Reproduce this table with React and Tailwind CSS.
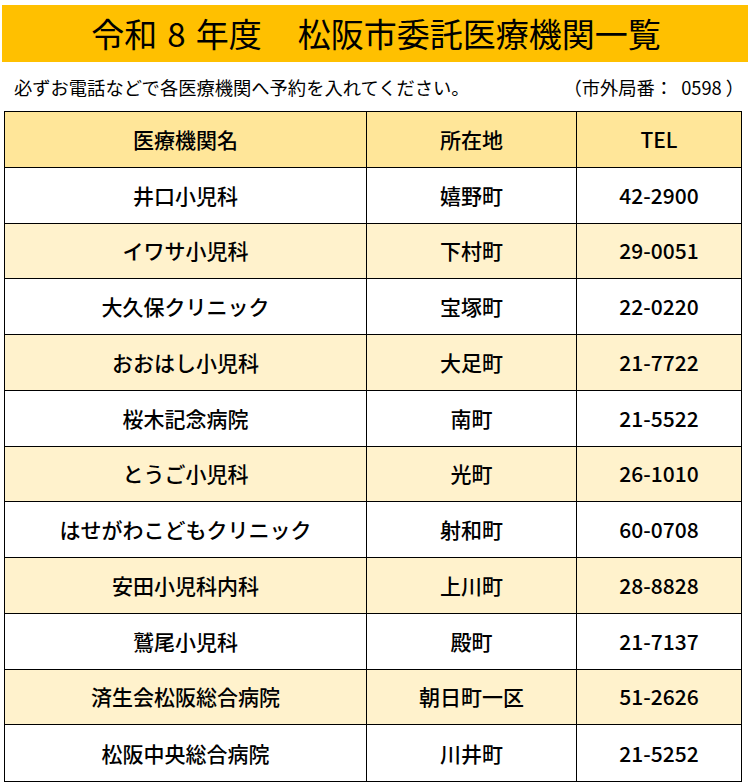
import React from "react";

const rows = [
  ["井口小児科", "嬉野町", "42-2900"],
  ["イワサ小児科", "下村町", "29-0051"],
  ["大久保クリニック", "宝塚町", "22-0220"],
  ["おおはし小児科", "大足町", "21-7722"],
  ["桜木記念病院", "南町", "21-5522"],
  ["とうご小児科", "光町", "26-1010"],
  ["はせがわこどもクリニック", "射和町", "60-0708"],
  ["安田小児科内科", "上川町", "28-8828"],
  ["鷲尾小児科", "殿町", "21-7137"],
  ["済生会松阪総合病院", "朝日町一区", "51-2626"],
  ["松阪中央総合病院", "川井町", "21-5252"],
];

const font = { fontFamily: '"Noto Sans CJK JP", "Noto Sans", sans-serif' };

function Row({ cells, bg, last }) {
  return (
    <div
      className={`flex h-[55.75px] ${bg} ${last ? "" : "border-b border-black"}`}
    >
      <div className="w-[362px] flex items-center justify-center border-r border-black">
        {cells[0]}
      </div>
      <div className="w-[210px] flex items-center justify-center border-r border-black">
        {cells[1]}
      </div>
      <div className="flex-1 flex items-center justify-center">{cells[2]}</div>
    </div>
  );
}

export default function App() {
  return (
    <div
      className="w-[748px] h-[784px] bg-white text-black overflow-hidden"
      style={font}
    >
      <div className="h-[5px]" />
      <div className="ml-[2px] h-[57px] bg-[#FFC000] flex items-center justify-center text-[33px] leading-none pl-[2px]">
        <span>令和</span>
        <span className="ml-[10px]">8</span>
        <span className="ml-[10px]">年度</span>
        <span className="ml-[36px]">松阪市委託医療機関一覧</span>
      </div>
      <div className="h-[49px] flex items-center justify-between pl-[14px] pr-[4px] text-[18.3px] leading-none pt-[1px]">
        <span>必ずお電話などで各医療機関へ予約を入れてください。</span>
        <span>
          （市外局番：<span className="ml-[8px]">0598</span>
          <span className="ml-[4px]">）</span>
        </span>
      </div>
      <div className="ml-[4px] w-[738px] border border-black text-[21px] font-medium leading-none">
        <Row cells={["医療機関名", "所在地", "TEL"]} bg="bg-[#FFE699]" />
        {rows.map((r, i) => (
          <Row
            key={i}
            cells={r}
            bg={i % 2 === 0 ? "bg-white" : "bg-[#FFF2CC]"}
            last={i === rows.length - 1}
          />
        ))}
      </div>
    </div>
  );
}
